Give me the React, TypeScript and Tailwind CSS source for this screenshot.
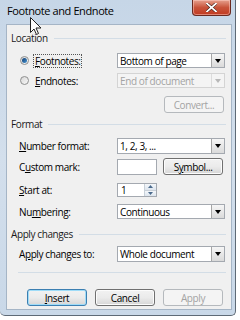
import React from "react";

const font = { fontFamily: '"Open Sans", "Noto Sans", sans-serif' };

function U({ children }: { children: React.ReactNode }) {
  return <span className="underline underline-offset-[1px] decoration-[0.5px]">{children}</span>;
}

function DropArrow({ disabled }: { disabled?: boolean }) {
  return (
    <div
      className={`w-[13px] h-full flex items-center justify-center border-l ${
        disabled
          ? "border-[#dcdcdc] bg-[#f4f4f4]"
          : "border-[#a6a6a6] bg-gradient-to-b from-[#f6f6f6] to-[#dadada]"
      }`}
    >
      <svg width="6" height="4" viewBox="0 0 6 4">
        <path d="M0 0 L6 0 L3 4 Z" fill={disabled ? "#b8b8b8" : "#000"} />
      </svg>
    </div>
  );
}

function Select({ value, disabled, h = 15 }: { value: string; disabled?: boolean; h?: number }) {
  return (
    <div
      className={`w-[108px] flex items-stretch border ${
        disabled ? "border-[#d4d4d4] bg-[#f4f4f4] text-[#a3a3a3]" : "border-[#a4a9b0] bg-white text-black"
      }`}
      style={{ height: h }}
    >
      <div className="flex-1 flex items-center pl-[2px] leading-none whitespace-nowrap">{value}</div>
      <DropArrow disabled={disabled} />
    </div>
  );
}

function Btn({
  children,
  disabled,
  def,
}: {
  children: React.ReactNode;
  disabled?: boolean;
  def?: boolean;
}) {
  return (
    <div
      className={`w-[60px] h-[17px] rounded-[3px] border flex items-center justify-center leading-none ${
        disabled
          ? "border-[#b5b9bd] bg-[#f4f4f4] text-[#a3a3a3]"
          : def
          ? "border-[#3c7fb1] bg-gradient-to-b from-[#f2f2f2] via-[#ebebeb] to-[#d6d6d6] text-black shadow-[inset_0_0_0_1px_#9fdcf8]"
          : "border-[#707070] bg-gradient-to-b from-[#f2f2f2] via-[#ebebeb] to-[#d6d6d6] text-black shadow-[inset_0_0_0_1px_#fcfcfc]"
      }`}
    >
      {children}
    </div>
  );
}

function Heading({ text }: { text: string }) {
  return (
    <div className="h-[10px] flex items-center gap-[6px]">
      <span className="leading-none whitespace-nowrap text-[#1a1a1a]">{text}</span>
      <div className="flex-1 h-px bg-[#d3dde6]" />
    </div>
  );
}

function Radio({ checked }: { checked?: boolean }) {
  return (
    <div className="w-[9px] h-[9px] rounded-full border border-[#8e8f8f] bg-gradient-to-br from-[#d8d8d8] to-[#f8f8f8] flex items-center justify-center">
      {checked && (
        <div className="w-[5px] h-[5px] rounded-full bg-gradient-to-br from-[#0f3a6e] to-[#4b9ad8]" />
      )}
    </div>
  );
}

export default function App() {
  return (
    <div className="w-[240px] h-[320px] bg-white relative overflow-hidden text-[10px] tracking-[-0.4px]" style={font}>
      {/* window frame */}
      <div className="w-[236px] h-[316px] rounded-b-[5px] border-r border-b border-[#5e6a76] bg-gradient-to-b from-[#c6d6e7] via-[#d3dfec] to-[#c9d8e8] flex flex-col">
        {/* title bar */}
        <div className="h-[24px] flex items-start relative">
          <div className="pl-[7px] pt-[5px] text-[11px] tracking-[-0.4px] leading-none text-black">Footnote and Endnote</div>
          <div className="ml-auto mr-[4px] w-[39px] h-[16px] rounded-b-[4px] border border-t-0 border-[#6b2a20] bg-gradient-to-b from-[#e5a08e] via-[#c8533a] to-[#c13a20] flex items-center justify-center shadow-[inset_0_0_0_1px_rgba(255,210,200,0.5)]">
            <svg width="11" height="9" viewBox="0 0 11 9">
              <path d="M1 0.5 L10 8.5 M10 0.5 L1 8.5" stroke="#3a1a14" strokeWidth="3" strokeLinecap="square" />
              <path d="M1 0.5 L10 8.5 M10 0.5 L1 8.5" stroke="#ffffff" strokeWidth="1.8" strokeLinecap="square" />
            </svg>
          </div>
        </div>
        {/* client area */}
        <div className="ml-[6px] w-[226px] h-[286px] bg-[#f0f0f0] border border-[#a5b5c6] flex flex-col pl-[4px] pr-[5px]">
          <div className="mt-[8px]">
            <Heading text="Location" />
          </div>
          {/* Footnotes */}
          <div className="mt-[10px] h-[15px] flex items-center">
            <div className="w-[106px] flex items-center pl-[9px]">
              <Radio checked />
              <span className="ml-[4px] px-[1px] leading-none border border-dotted border-[#555] py-[1px]">
                <U>F</U>ootnotes:
              </span>
            </div>
            <Select value="Bottom of page" />
          </div>
          {/* Endnotes */}
          <div className="mt-[5px] h-[15px] flex items-center">
            <div className="w-[106px] flex items-center pl-[9px]">
              <Radio />
              <span className="ml-[5px] px-[1px] leading-none">
                <U>E</U>ndnotes:
              </span>
            </div>
            <Select value="End of document" disabled />
          </div>
          {/* Convert */}
          <div className="mt-[8px] flex justify-end pr-[2px]">
            <Btn disabled>Convert...</Btn>
          </div>
          <div className="mt-[6px]">
            <Heading text="Format" />
          </div>
          {/* Number format */}
          <div className="mt-[9px] h-[16px] flex items-center">
            <div className="w-[106px] pl-[8px] leading-none">
              <U>N</U>umber format:
            </div>
            <Select value="1, 2, 3, ..." h={16} />
          </div>
          {/* Custom mark */}
          <div className="mt-[4px] h-[17px] flex items-center">
            <div className="w-[106px] pl-[8px] leading-none">
              C<U>u</U>stom mark:
            </div>
            <div className="w-[40px] h-[16px] bg-white border border-[#a4a9b0]" />
            <div className="ml-[6px]">
              <Btn>
                S<U>y</U>mbol...
              </Btn>
            </div>
          </div>
          {/* Start at */}
          <div className="mt-[8px] h-[14px] flex items-center">
            <div className="w-[106px] pl-[8px] leading-none">
              <U>S</U>tart at:
            </div>
            <div className="w-[40px] h-[14px] bg-white border border-[#a4a9b0] flex items-stretch">
              <div className="flex-1 pl-[3px] flex items-center leading-none">1</div>
              <div className="w-[12px] flex flex-col border-l border-[#c8d0d8]">
                <div className="flex-1 flex items-center justify-center bg-gradient-to-b from-[#f4f7fa] to-[#dde5ee] border-b border-[#c8d0d8]">
                  <svg width="5" height="3" viewBox="0 0 5 3">
                    <path d="M0 3 L5 3 L2.5 0 Z" fill="#4a6a8c" />
                  </svg>
                </div>
                <div className="flex-1 flex items-center justify-center bg-gradient-to-b from-[#f4f7fa] to-[#dde5ee]">
                  <svg width="5" height="3" viewBox="0 0 5 3">
                    <path d="M0 0 L5 0 L2.5 3 Z" fill="#4a6a8c" />
                  </svg>
                </div>
              </div>
            </div>
          </div>
          {/* Numbering */}
          <div className="mt-[7px] h-[15px] flex items-center">
            <div className="w-[106px] pl-[8px] leading-none">
              Nu<U>m</U>bering:
            </div>
            <Select value="Continuous" />
          </div>
          <div className="mt-[10px]">
            <Heading text="Apply changes" />
          </div>
          {/* Apply changes to */}
          <div className="mt-[7px] h-[16px] flex items-center">
            <div className="w-[106px] pl-[8px] leading-none">
              A<U>p</U>ply changes to:
            </div>
            <Select value="Whole document" h={16} />
          </div>
          <div className="mt-[10px] ml-[7px] h-px bg-[#d3dde6]" />
          {/* buttons */}
          <div className="mt-[16px] flex items-center pl-[16px] gap-[8px]">
            <Btn def>
              <U>I</U>nsert
            </Btn>
            <Btn>Cancel</Btn>
            <Btn disabled>Apply</Btn>
          </div>
        </div>
      </div>
      {/* mouse cursor */}
      <svg className="absolute left-[30px] top-[17px]" width="13" height="19" viewBox="0 0 13 19">
        <path
          d="M0.5 0.5 L0.5 15.5 L4 12 L6.5 17.5 L8.5 16.5 L6 11 L11 11 Z"
          fill="#ffffff"
          stroke="#222"
          strokeWidth="1"
          strokeLinejoin="round"
        />
      </svg>
    </div>
  );
}
